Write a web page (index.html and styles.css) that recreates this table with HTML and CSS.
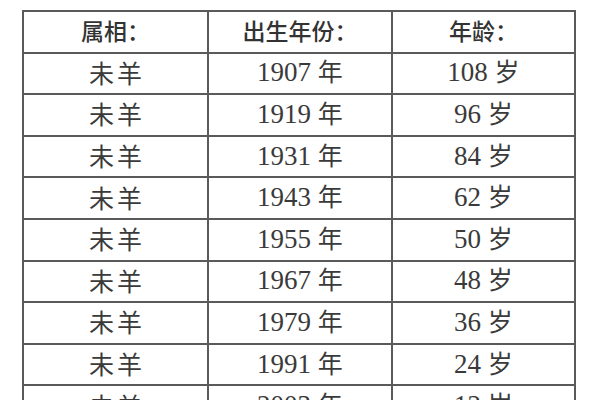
FILE: index.html
```html
<!DOCTYPE html>
<html lang="zh">
<head>
<meta charset="utf-8">
<link rel="stylesheet" href="styles.css">
</head>
<body>
<table class="tbl">
  <colgroup><col class="c1"><col class="c2"><col class="c3"></colgroup>
  <tr class="head"><th>属相：</th><th>出生年份：</th><th>年龄：</th></tr>
  <tr><td>未羊</td><td>1907 <span class="u">年</span></td><td>108 <span class="u">岁</span></td></tr>
  <tr><td>未羊</td><td>1919 <span class="u">年</span></td><td>96 <span class="u">岁</span></td></tr>
  <tr><td>未羊</td><td>1931 <span class="u">年</span></td><td>84 <span class="u">岁</span></td></tr>
  <tr><td>未羊</td><td>1943 <span class="u">年</span></td><td>62 <span class="u">岁</span></td></tr>
  <tr><td>未羊</td><td>1955 <span class="u">年</span></td><td>50 <span class="u">岁</span></td></tr>
  <tr><td>未羊</td><td>1967 <span class="u">年</span></td><td>48 <span class="u">岁</span></td></tr>
  <tr><td>未羊</td><td>1979 <span class="u">年</span></td><td>36 <span class="u">岁</span></td></tr>
  <tr><td>未羊</td><td>1991 <span class="u">年</span></td><td>24 <span class="u">岁</span></td></tr>
  <tr><td>未羊</td><td>2003 <span class="u">年</span></td><td>12 <span class="u">岁</span></td></tr>
</table>
</body>
</html>
```
FILE: styles.css
```css
html, body {
  margin: 0;
  padding: 0;
  background: #ffffff;
  height: 400px;
  overflow: hidden;
}
.tbl {
  margin: 10px 0 0 22px;
  border-collapse: collapse;
  table-layout: fixed;
  width: 552px;
  border: 2px solid #5a5a5a;
  font-family: "Liberation Serif", "Noto Sans CJK SC", serif;
  font-size: 27px;
  color: #3a3a3a;
}
.c1 { width: 185px; }
.c2 { width: 184px; }
.c3 { width: 183px; }
.tbl tr { height: 41.6px; }
.tbl th, .tbl td {
  border: 2px solid #5a5a5a;
  padding: 0 0 2px 0;
  text-align: center;
  vertical-align: middle;
  line-height: 1;
  white-space: nowrap;
}
.tbl th {
  font-family: "Noto Sans CJK SC", sans-serif;
  font-weight: 500;
  font-size: 23px;
  color: #333;
}
.u {
  font-family: "Noto Sans CJK SC", sans-serif;
  font-size: 25px;
}
.tbl td:first-child {
  font-family: "Noto Sans CJK SC", sans-serif;
  font-size: 25px;
  letter-spacing: 3px;
  text-indent: 3px;
}
```
